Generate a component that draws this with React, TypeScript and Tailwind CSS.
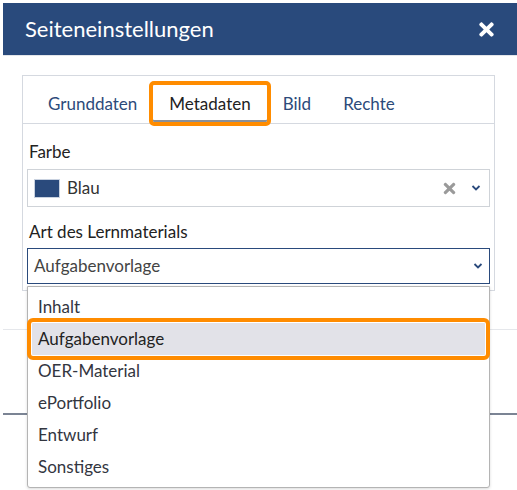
import { FaTimes } from "react-icons/fa";

const Chevron = ({ className = "" }: { className?: string }) => (
  <svg width="10" height="6" viewBox="0 0 10 6" className={className}>
    <path d="M1.5 1 L5 4.5 L8.5 1" fill="none" stroke="#2a4a7c" strokeWidth="1.8" />
  </svg>
);

const tabs = ["Grunddaten", "Metadaten", "Bild", "Rechte"];
const options = ["Inhalt", "Aufgabenvorlage", "OER-Material", "ePortfolio", "Entwurf", "Sonstiges"];

export default function App() {
  return (
    <div
      className="relative w-[517px] h-[490px] overflow-hidden bg-white pl-[3px] pt-[3px]"
      style={{ fontFamily: "Lato, 'Open Sans', sans-serif" }}
    >
      {/* Modal */}
      <div className="w-[514px] border-b-2 border-[#7b8494]">
        <header className="h-[53px] bg-[#294a7c] flex items-center justify-between pl-[22px] pr-[20px] border-b border-[#e3e6ea]">
          <h1 className="text-[22px] text-white leading-none">Seiteneinstellungen</h1>
          <FaTimes className="text-white" size={21} />
        </header>

        <div className="h-[274px] pl-[19px] pr-[22px] pt-[19px] border-b border-[#e5e7eb]">
          <div className="border border-[#d5d9e0] pb-[6px]">
            {/* Tabs */}
            <div className="flex h-[48px] items-end pl-[9px] border-b border-[#d5d9e0]">
              {tabs.map((tab) => (
                <div
                  key={tab}
                  className={
                    tab === "Metadaten"
                      ? "h-[37px] mb-[1px] flex items-center px-4 text-[17px] text-[#222] bg-white rounded-[1px] outline-4 outline-[#ff8c00] shadow-[inset_0_-2px_0_#8a9099]"
                      : "h-[37px] mb-[1px] flex items-center px-4 text-[17px] text-[#2c4a7a]"
                  }
                >
                  {tab}
                </div>
              ))}
            </div>

            <div className="px-[4px]">
              <div className="mt-[16px] h-[24px] leading-[24px] text-[17px] text-[#222] pl-[2px]">Farbe</div>
              <div className="mt-[5px] h-[38px] border border-[#cfd3d8] flex items-center pl-[6px] pr-[8px]">
                <span className="w-[26px] h-[19px] bg-[#2a4a7c] border border-[#c9d2e0]" />
                <span className="ml-[7px] text-[17px] text-[#333]">Blau</span>
                <FaTimes className="ml-auto text-[#9a9a9a]" size={17} />
                <Chevron className="ml-[13px]" />
              </div>

              <div className="mt-[13px] h-[24px] leading-[24px] text-[17px] text-[#222] pl-[2px]">Art des Lernmaterials</div>
              <div className="mt-[4px] h-[36px] border border-[#2a4a7c] flex items-center pl-[6px] pr-[6px]">
                <span className="text-[17px] text-[#444]">Aufgabenvorlage</span>
                <Chevron className="ml-auto" />
              </div>
            </div>
          </div>
        </div>

        <div className="h-[83px]" />
      </div>

      {/* Dropdown menu */}
      <div className="absolute left-[27px] top-[286px] w-[463px] bg-white border border-[#b4b4b4] rounded-b-[3px] shadow-[0_1px_3px_rgba(0,0,0,0.15)] py-[4px]">
        {options.map((opt) => (
          <div
            key={opt}
            className={
              opt === "Aufgabenvorlage"
                ? "h-[32px] mx-[4px] px-[6px] flex items-center text-[17px] text-[#222] bg-[#e2e2e8] outline-4 outline-offset-1 outline-[#ff8c00] rounded-[1px]"
                : "h-[32px] mx-[4px] px-[6px] flex items-center text-[17px] text-[#33363f]"
            }
          >
            {opt}
          </div>
        ))}
      </div>
    </div>
  );
}
